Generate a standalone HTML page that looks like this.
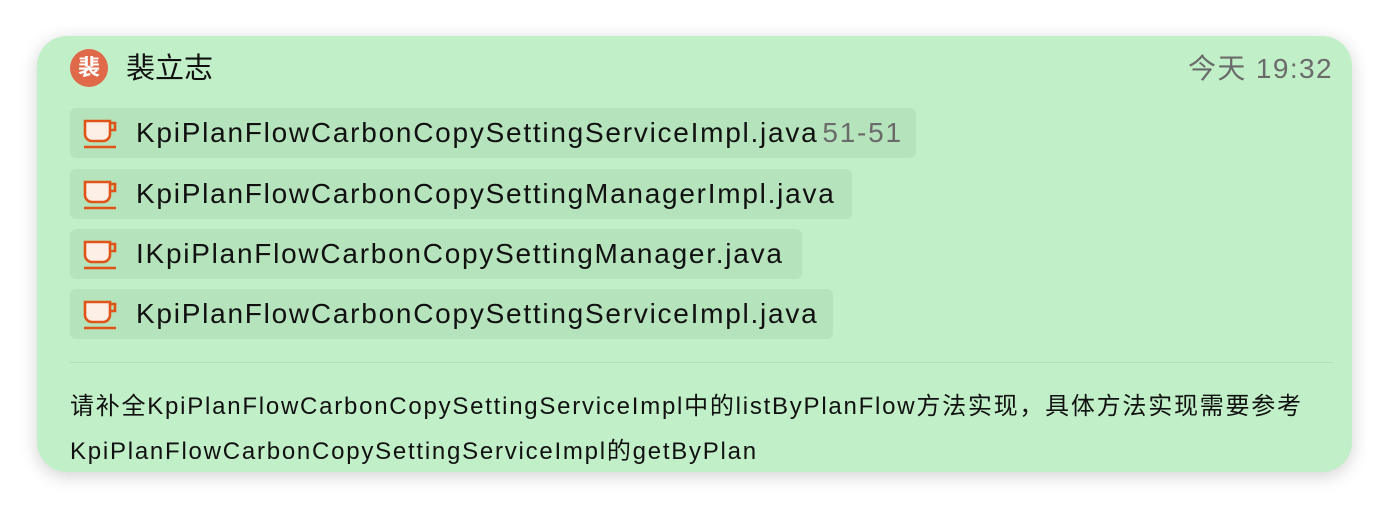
<!DOCTYPE html>
<html><head><meta charset="utf-8"><style>
body{margin:0;width:1388px;height:508px;background:#fff;font-family:"Liberation Sans","Noto Sans CJK SC",sans-serif;position:relative;overflow:hidden}
.card{position:absolute;left:37px;top:36px;width:1315px;height:436px;background:#c1efc7;border-radius:30px;box-shadow:0 4px 18px rgba(0,0,0,.18)}
.av{position:absolute;left:70px;top:49px;width:38px;height:38px;border-radius:50%;background:#e0694a;color:#fff;font-size:22px;font-weight:bold;text-align:center;line-height:38px}
.name{position:absolute;left:126px;top:52px;font-size:29px;color:#111;line-height:34px}
.time{position:absolute;right:55px;top:52px;font-size:28px;letter-spacing:1.4px;color:#6b6b6b;line-height:34px}
.chip{position:absolute;left:70px;height:50px;background:#b5e3bb;border-radius:6px;font-size:28px;letter-spacing:1.75px;line-height:50px;color:#111;padding-left:66px;white-space:nowrap;box-sizing:border-box}
.chip svg{position:absolute;left:12px;top:10px}
.chip span{color:#6b6b6b;margin-left:4px}
.div{position:absolute;left:70px;width:1263px;top:362px;height:1px;background:#b2dfb8}
.txt{position:absolute;left:70px;top:384px;font-size:24px;letter-spacing:1.76px;line-height:45px;color:#111;width:1290px;white-space:nowrap}
</style></head><body>
<div class="card"></div>
<div class="av">裴</div>
<div class="name">裴立志</div>
<div class="time">今天 19:32</div>
<div class="chip" style="top:108px;width:846px">
<svg width="38" height="32" viewBox="0 0 38 32"><path d="M3 3h25v13a7 7 0 0 1-7 7h-11a7 7 0 0 1-7-7z" fill="#fdeee6" stroke="#e0541a" stroke-width="2.6"/><path d="M28 5h5v7h-5" fill="none" stroke="#e0541a" stroke-width="2.6"/><path d="M2 29h32" stroke="#e0541a" stroke-width="2.6"/></svg>KpiPlanFlowCarbonCopySettingServiceImpl.java<span>51-51</span></div>
<div class="chip" style="top:169px;width:782px">
<svg width="38" height="32" viewBox="0 0 38 32"><path d="M3 3h25v13a7 7 0 0 1-7 7h-11a7 7 0 0 1-7-7z" fill="#fdeee6" stroke="#e0541a" stroke-width="2.6"/><path d="M28 5h5v7h-5" fill="none" stroke="#e0541a" stroke-width="2.6"/><path d="M2 29h32" stroke="#e0541a" stroke-width="2.6"/></svg>KpiPlanFlowCarbonCopySettingManagerImpl.java</div>
<div class="chip" style="top:229px;width:732px">
<svg width="38" height="32" viewBox="0 0 38 32"><path d="M3 3h25v13a7 7 0 0 1-7 7h-11a7 7 0 0 1-7-7z" fill="#fdeee6" stroke="#e0541a" stroke-width="2.6"/><path d="M28 5h5v7h-5" fill="none" stroke="#e0541a" stroke-width="2.6"/><path d="M2 29h32" stroke="#e0541a" stroke-width="2.6"/></svg>IKpiPlanFlowCarbonCopySettingManager.java</div>
<div class="chip" style="top:289px;width:763px">
<svg width="38" height="32" viewBox="0 0 38 32"><path d="M3 3h25v13a7 7 0 0 1-7 7h-11a7 7 0 0 1-7-7z" fill="#fdeee6" stroke="#e0541a" stroke-width="2.6"/><path d="M28 5h5v7h-5" fill="none" stroke="#e0541a" stroke-width="2.6"/><path d="M2 29h32" stroke="#e0541a" stroke-width="2.6"/></svg>KpiPlanFlowCarbonCopySettingServiceImpl.java</div>
<div class="div"></div>
<div class="txt">请补全KpiPlanFlowCarbonCopySettingServiceImpl中的listByPlanFlow方法实现，具体方法实现需要参考<br>KpiPlanFlowCarbonCopySettingServiceImpl的getByPlan</div>
</body></html>
